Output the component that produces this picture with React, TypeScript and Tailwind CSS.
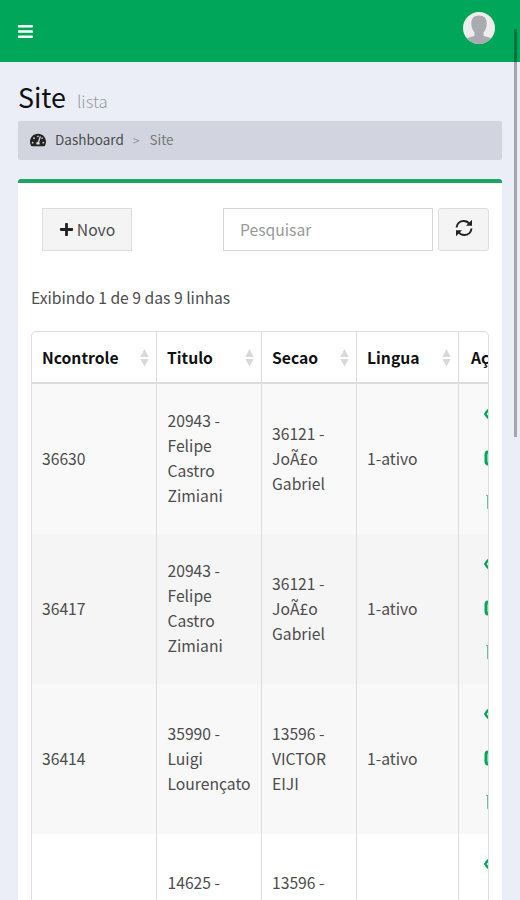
import { FaBars, FaPlus, FaTachometerAlt } from 'react-icons/fa'

const columns = [
  { label: 'Ncontrole', width: 'w-[125px]' },
  { label: 'Titulo', width: 'w-[105px]' },
  { label: 'Secao', width: 'w-[95px]' },
  { label: 'Lingua', width: 'w-[102px]' },
]

const rows = [
  { id: '36630', titulo: ['20943 -', 'Felipe', 'Castro', 'Zimiani'], secao: ['36121 -', 'JoÃ£o', 'Gabriel'], lingua: '1-ativo', bg: 'bg-[#f9f9f9]' },
  { id: '36417', titulo: ['20943 -', 'Felipe', 'Castro', 'Zimiani'], secao: ['36121 -', 'JoÃ£o', 'Gabriel'], lingua: '1-ativo', bg: 'bg-[#f5f5f5]' },
  { id: '36414', titulo: ['35990 -', 'Luigi', 'Lourençato'], secao: ['13596 -', 'VICTOR', 'EIJI'], lingua: '1-ativo', bg: 'bg-[#f8f8f8]' },
  { id: '', titulo: ['14625 -'], secao: ['13596 -'], lingua: '', bg: 'bg-white' },
]

function Lines({ items }: { items: string[] }) {
  return (
    <>
      {items.map((s) => (
        <div key={s} className="whitespace-nowrap">{s}</div>
      ))}
    </>
  )
}

// ── Icons ────────────────────────────────────────────────────────────────────
function SortIcon() {
  return (
    <svg width="9" height="18" viewBox="0 0 9 18" className="shrink-0 text-[#d9d9d9]" fill="currentColor">
      <path d="M4.5 0 8.700 8H0.300z" />
      <path d="M0.300 10h8.400l-4.200 7.500z" />
    </svg>
  )
}

function RefreshIcon() {
  return (
    <svg width="18" height="18" viewBox="0 0 18 18" fill="none" stroke="#222" strokeWidth="2">
      <path d="M1.500 8.500C2 4.500 5 2 8.700 2c2.500 0 4.500 1 5.800 3" />
      <path d="M16.500 9.500C16 13.500 13 16 9.300 16c-2.500 0-4.500-1-5.800-3" />
      <path d="M17 0.800v6h-6z" fill="#222" stroke="none" />
      <path d="M1 17.200v-6h6z" fill="#222" stroke="none" />
    </svg>
  )
}

function EyeIcon() {
  return (
    <svg width="18" height="16" viewBox="0 0 18 16" fill="none" stroke="currentColor" strokeWidth="2.500">
      <path d="M1.300 8c2-3.800 4.500-5.500 7.700-5.500S15 4.200 16.700 8c-2 3.800-4.500 5.500-7.700 5.500S3.300 11.800 1.300 8z" />
      <circle cx="9" cy="7" r="3" />
    </svg>
  )
}

function EditIcon() {
  return (
    <svg width="18" height="16" viewBox="0 0 18 16" fill="none" stroke="currentColor" strokeWidth="3">
      <path d="M11 2H4.500A2.500 2.500 0 0 0 2 4.500v7A2.500 2.500 0 0 0 4.500 14h7a2.500 2.500 0 0 0 2.500-2.500V9.500" />
      <path d="m7 10 .5-2.500L14 1l2 2-6.500 6.500z" strokeWidth="2" />
    </svg>
  )
}

function TrashIcon() {
  return (
    <svg width="18" height="16" viewBox="0 0 18 16" fill="none" stroke="currentColor" strokeWidth="1" opacity="0.6">
      <path d="M2 1.500h13M3.500 2V14q0 1.500 1.500 1.500h7Q13.500 15.500 13.500 14V2M6.500 5v7M8.500 5v7M10.500 5v7" />
    </svg>
  )
}

function Avatar() {
  return (
    <div className="h-8 w-8 overflow-hidden rounded-full bg-[#ededed]">
      <svg width="32" height="32" viewBox="0 0 32 32" fill="#a9abae">
        <path d="M16 3.500c5.200 0 7.700 3 7.700 7.800 0 4-1.200 7.300-3.200 9v3.200c1 1.500 4.500 1 8 3V32H4v-5.500c3.500-2 6.500-1.500 7.500-3v-3.200c-2-1.700-3.200-5-3.200-9 0-4.800 2.500-7.800 7.700-7.800z" />
      </svg>
    </div>
  )
}

// ── Table ────────────────────────────────────────────────────────────────────
function SiteTable() {
  return (
    <div className="mt-[21px] h-[620px] overflow-hidden rounded-t-[5px] border border-[#ddd]">
      <table className="w-[510px] table-fixed border-separate border-spacing-0">
        <thead>
          <tr className="h-[52px]">
            {columns.map((c) => (
              <th key={c.label} className={`${c.width} border-r border-b-2 border-[#ddd] pt-px pr-[7px] pl-[10px] text-left font-bold text-[#111]`}>
                <div className="flex items-center justify-between">
                  {c.label}
                  <SortIcon />
                </div>
              </th>
            ))}
            <th className="border-b-2 border-[#ddd] pt-px pl-3 text-left font-bold text-[#111]">Ações</th>
          </tr>
        </thead>
        <tbody>
          {rows.map((r, i) => (
            <tr key={i} className={`h-[150px] ${r.bg} ${i === 3 ? 'align-top' : 'align-middle'}`}>
              <td className="border-r border-[#ddd] pb-[2px] pl-[10px]">{r.id}</td>
              <td className={`border-r border-[#ddd] pl-[10.500px] ${i === 3 ? 'pt-[36px]' : 'pb-[2px]'}`}><Lines items={r.titulo} /></td>
              <td className={`border-r border-[#ddd] pl-[10px] ${i === 3 ? 'pt-[36px]' : 'pb-[2px]'}`}><Lines items={r.secao} /></td>
              <td className="border-r border-[#ddd] pb-[2px] pl-[10px]">{r.lingua}</td>
              <td className={`pl-[25px] ${i === 3 ? 'pt-[22px]' : 'pb-[2px]'}`}>
                <div className="flex flex-col gap-7 text-[#00a65a]">
                  <EyeIcon />
                  <EditIcon />
                  <TrashIcon />
                </div>
              </td>
            </tr>
          ))}
        </tbody>
      </table>
    </div>
  )
}

export default function App() {
  return (
    <div className="relative h-[900px] w-[520px] overflow-hidden bg-[#ebeef6] font-['Noto_Sans_CJK_SC','Noto_Sans',sans-serif] text-[15.700px] leading-[25px] text-[#4c4c4c]">
      <header className="flex h-[62px] items-center justify-between bg-[#00a65a] pr-[25px] pl-[17px]">
        <FaBars size={17} className="text-white" />
        <div className="-mt-[6px]"><Avatar /></div>
      </header>

      <main className="px-[18px]">
        <h1 className="flex h-[59px] items-baseline pt-[19px] text-[26.800px] leading-[32px] text-[#111]">
          Site
          <small className="ml-[11px] text-[16.800px] font-light text-[#999]">lista</small>
        </h1>

        <ol className="flex h-[39px] items-center rounded-[2px] bg-[#d2d5e0] pb-[2px] pl-3 text-[13.500px]">
          <li className="flex items-center">
            <FaTachometerAlt size={16} className="mr-[9px] text-[#222]" />
            Dashboard
          </li>
          <li className="mr-[10px] ml-[9px] text-[12px] text-[#999]">&gt;</li>
          <li className="text-[#777]">Site</li>
        </ol>

        <section className="mt-[19px] rounded-t-[3px] border-t-4 border-[#1ba462] bg-white px-[13px] pt-[25px]">
          <div className="flex h-[43px] pl-[11px]">
            <button className="flex w-[90px] items-center justify-center border border-[#ddd] bg-[#f4f4f4]">
              <FaPlus size={15} className="mr-[3px] text-[#222]" />
              Novo
            </button>
            <input
              placeholder="Pesquisar"
              className="ml-auto w-[210px] border border-[#d6d6d6] px-4 placeholder:text-[#999]"
            />
            <button className="ml-[5px] flex w-[51px] items-center justify-center rounded-[3px] border border-[#ddd] bg-[#f4f4f4] pb-[3px]">
              <RefreshIcon />
            </button>
          </div>
          <p className="mt-[34px]">Exibindo 1 de 9 das 9 linhas</p>
          <SiteTable />
        </section>
      </main>

      {/* overlay scroll thumb */}
      <div className="absolute top-[29px] right-[3px] h-[408px] w-[3px] bg-black/30" />
    </div>
  )
}
